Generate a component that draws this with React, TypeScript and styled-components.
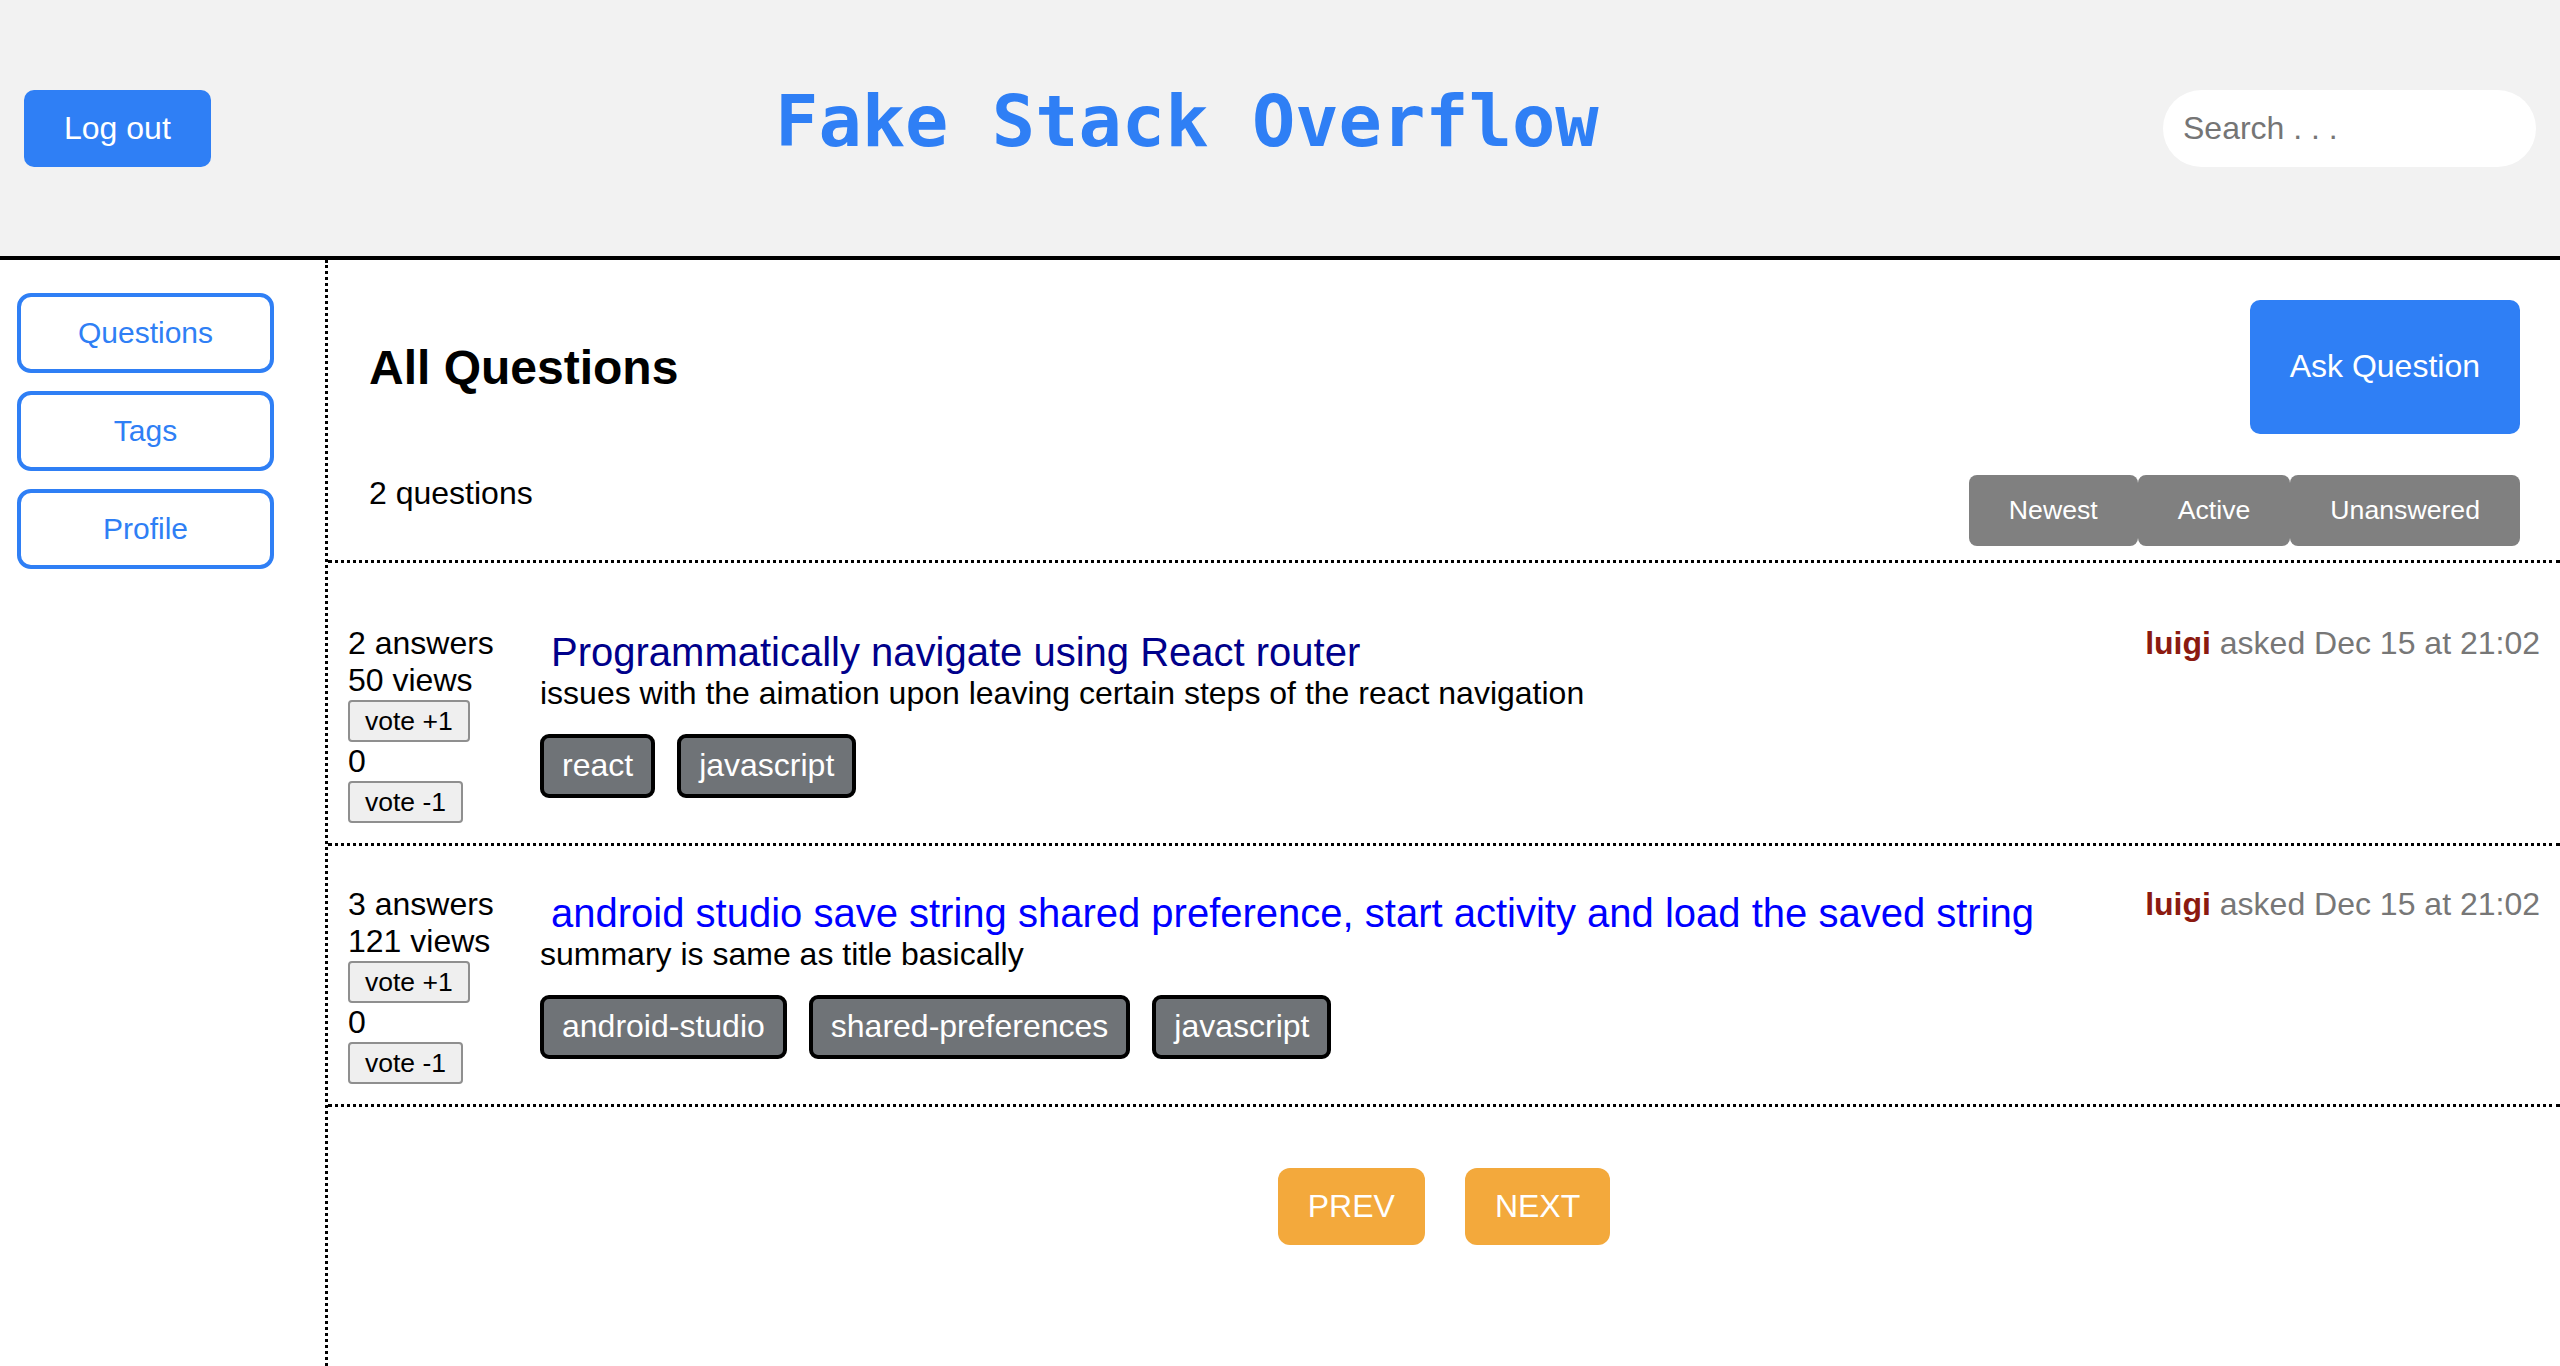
import React from "react";
import styled, { createGlobalStyle } from "styled-components";

const GlobalStyle = createGlobalStyle`
  * { box-sizing: border-box; }
  body {
    margin: 0;
    font-family: "Liberation Sans", Arial, Helvetica, sans-serif;
    background: #ffffff;
    color: #000000;
  }
`;

const BLUE = "#2f7ff5";

const Header = styled.header`
  height: 260px;
  background: #f2f2f2;
  border-bottom: 4px solid #000;
  display: flex;
  align-items: center;
  justify-content: space-between;
  padding: 0 24px;
`;

const LogoutButton = styled.button`
  background: ${BLUE};
  color: #fff;
  border: none;
  border-radius: 10px;
  padding: 20px 40px;
  font-family: "Liberation Sans", Arial, sans-serif;
  font-size: 32px;
  line-height: 37px;
  cursor: pointer;
`;

const SiteTitle = styled.h1`
  margin: 0 0 14px 0;
  font-family: "DejaVu Sans Mono", "Liberation Mono", monospace;
  font-weight: bold;
  font-size: 72px;
  color: ${BLUE};
`;

const SearchInput = styled.input`
  width: 373px;
  height: 77px;
  border: none;
  border-radius: 40px;
  padding: 0 20px;
  background: #fff;
  font-family: "Liberation Sans", Arial, sans-serif;
  font-size: 32px;
  outline: none;
  &::placeholder {
    color: #757575;
  }
`;

const Body = styled.div`
  display: flex;
  min-height: calc(100vh - 260px);
`;

const Sidebar = styled.nav`
  width: 328px;
  flex-shrink: 0;
  border-right: 3px dotted #000;
  padding: 33px 0 0 17px;
  display: flex;
  flex-direction: column;
  gap: 18px;
`;

const NavButton = styled.button`
  width: 257px;
  height: 80px;
  background: #fff;
  border: 4px solid ${BLUE};
  border-radius: 14px;
  color: ${BLUE};
  font-family: "Liberation Sans", Arial, sans-serif;
  font-size: 30px;
  cursor: pointer;
`;

const Main = styled.main`
  flex: 1;
  min-width: 0;
`;

const TopSection = styled.section`
  padding: 40px 40px 14px 41px;
  border-bottom: 3px dotted #000;
`;

const HeadingRow = styled.div`
  display: flex;
  justify-content: space-between;
  align-items: center;
`;

const Heading = styled.h2`
  margin: 0;
  font-size: 48px;
  font-weight: bold;
`;

const AskButton = styled.button`
  background: ${BLUE};
  color: #fff;
  border: none;
  border-radius: 10px;
  padding: 48px 40px 49px;
  font-family: "Liberation Sans", Arial, sans-serif;
  font-size: 32px;
  line-height: 37px;
  cursor: pointer;
`;

const CountRow = styled.div`
  margin-top: 41px;
  display: flex;
  justify-content: space-between;
  align-items: flex-start;
`;

const Count = styled.div`
  font-size: 32px;
  line-height: 37px;
`;

const SortGroup = styled.div`
  display: flex;
`;

const SortButton = styled.button`
  background: #808080;
  color: #fff;
  border: none;
  border-radius: 8px;
  padding: 20px 40px;
  font-family: "Liberation Sans", Arial, sans-serif;
  font-size: 26.67px;
  line-height: 31px;
  cursor: pointer;
`;

const List = styled.div`
  margin-top: 22px;
`;

const Row = styled.div`
  display: flex;
  align-items: flex-start;
  padding: 40px 20px 19px 20px;
  border-bottom: 3px dotted #000;
`;

const Stats = styled.div`
  width: 192px;
  flex-shrink: 0;
  font-size: 32px;
  line-height: 37px;
`;

const StatLine = styled.div``;

const VoteButton = styled.button`
  display: block;
  margin: 1px 0;
  background: #efefef;
  border: 2px solid #8f8f8f;
  border-radius: 4px;
  padding: 3px 15px;
  font-family: "Liberation Sans", Arial, sans-serif;
  font-size: 26.5px;
  line-height: 32px;
  color: #000;
  cursor: pointer;
`;

const Content = styled.div`
  flex: 1;
  min-width: 0;
  padding-top: 4px;
`;

const QTitle = styled.div<{ $visited?: boolean }>`
  font-size: 40px;
  line-height: 46px;
  padding-left: 11px;
  color: ${(p) => (p.$visited ? "#00008b" : "#0000ff")};
  cursor: pointer;
`;

const Summary = styled.div`
  font-size: 32px;
  line-height: 37px;
`;

const Tags = styled.div`
  margin-top: 22px;
  display: flex;
  gap: 22px;
`;

const Tag = styled.span`
  background: #6f7377;
  color: #fff;
  border: 4px solid #000;
  border-radius: 9px;
  padding: 9px 18px 10px;
  font-size: 32px;
  line-height: 37px;
`;

const Meta = styled.div`
  font-size: 32px;
  line-height: 37px;
  white-space: nowrap;
  color: #777;
`;

const Author = styled.span`
  color: #8b1a10;
  font-weight: bold;
`;

const Pager = styled.div`
  margin-top: 61px;
  display: flex;
  justify-content: center;
  gap: 40px;
`;

const PageButton = styled.button`
  background: #f3a93c;
  color: #fff;
  border: none;
  border-radius: 12px;
  padding: 20px 30px;
  font-family: "Liberation Sans", Arial, sans-serif;
  font-size: 32px;
  line-height: 37px;
  cursor: pointer;
`;

type Question = {
  answers: number;
  views: number;
  votes: number;
  title: string;
  summary: string;
  tags: string[];
  visited: boolean;
};

const questions: Question[] = [
  {
    answers: 2,
    views: 50,
    votes: 0,
    title: "Programmatically navigate using React router",
    summary:
      "issues with the aimation upon leaving certain steps of the react navigation",
    tags: ["react", "javascript"],
    visited: true,
  },
  {
    answers: 3,
    views: 121,
    votes: 0,
    title:
      "android studio save string shared preference, start activity and load the saved string",
    summary: "summary is same as title basically",
    tags: ["android-studio", "shared-preferences", "javascript"],
    visited: false,
  },
];

export default function App() {
  return (
    <>
      <GlobalStyle />
      <Header>
        <LogoutButton>Log out</LogoutButton>
        <SiteTitle>Fake Stack Overflow</SiteTitle>
        <SearchInput placeholder="Search . . ." />
      </Header>
      <Body>
        <Sidebar>
          <NavButton>Questions</NavButton>
          <NavButton>Tags</NavButton>
          <NavButton>Profile</NavButton>
        </Sidebar>
        <Main>
          <TopSection>
            <HeadingRow>
              <Heading>All Questions</Heading>
              <AskButton>Ask Question</AskButton>
            </HeadingRow>
            <CountRow>
              <Count>2 questions</Count>
              <SortGroup>
                <SortButton>Newest</SortButton>
                <SortButton>Active</SortButton>
                <SortButton>Unanswered</SortButton>
              </SortGroup>
            </CountRow>
          </TopSection>
          <List>
            {questions.map((q) => (
              <Row key={q.title}>
                <Stats>
                  <StatLine>{q.answers} answers</StatLine>
                  <StatLine>{q.views} views</StatLine>
                  <VoteButton>vote +1</VoteButton>
                  <StatLine>{q.votes}</StatLine>
                  <VoteButton>vote -1</VoteButton>
                </Stats>
                <Content>
                  <QTitle $visited={q.visited}>{q.title}</QTitle>
                  <Summary>{q.summary}</Summary>
                  <Tags>
                    {q.tags.map((t) => (
                      <Tag key={t}>{t}</Tag>
                    ))}
                  </Tags>
                </Content>
                <Meta>
                  <Author>luigi</Author> asked Dec 15 at 21:02
                </Meta>
              </Row>
            ))}
          </List>
          <Pager>
            <PageButton>PREV</PageButton>
            <PageButton>NEXT</PageButton>
          </Pager>
        </Main>
      </Body>
    </>
  );
}
